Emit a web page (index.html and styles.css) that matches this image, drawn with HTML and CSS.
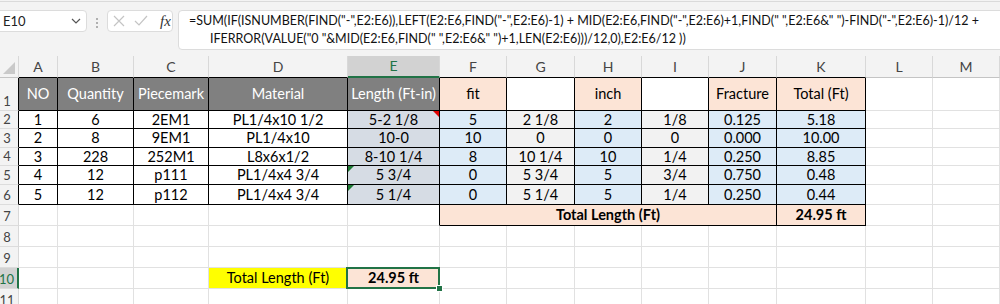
FILE: index.html
```html
<!DOCTYPE html>
<html lang="en">
<head>
    <meta charset="UTF-8">
    <meta name="viewport" content="width=device-width, initial-scale=1.0">
    <title>Total Length</title>
    <link rel="stylesheet" href="styles.css">
</head>
<body>
    <div class="formula-bar">
        <div class="name-box">
            <span>E10</span>
            <svg width="10" height="6" viewBox="0 0 10 6"><polyline points="1,1 5,5 9,1" fill="none" stroke="#555" stroke-width="1.2"/></svg>
        </div>
        <svg class="grip" width="4" height="12" viewBox="0 0 4 12"><circle cx="2" cy="2" r="1"/><circle cx="2" cy="6" r="1"/><circle cx="2" cy="10" r="1"/></svg>
        <div class="fx-box">
            <svg width="12" height="12" viewBox="0 0 12 12"><path d="M1 1 L11 11 M11 1 L1 11" stroke="#c4c4c4" stroke-width="1.2"/></svg>
            <svg width="14" height="12" viewBox="0 0 14 12"><polyline points="1,6 5,10 13,1" fill="none" stroke="#c4c4c4" stroke-width="1.2"/></svg>
            <span class="fx">fx</span>
        </div>
        <div class="formula">
            <div class="line">=SUM(IF(ISNUMBER(FIND("-",E2:E6)),LEFT(E2:E6,FIND("-",E2:E6)-1) + MID(E2:E6,FIND("-",E2:E6)+1,FIND(" ",E2:E6&amp;" ")-FIND("-",E2:E6)-1)/12 +</div>
            <div class="line indent">IFERROR(VALUE("0 "&amp;MID(E2:E6,FIND(" ",E2:E6&amp;" ")+1,LEN(E2:E6)))/12,0),E2:E6/12 ))</div>
        </div>
    </div>

    <div class="sheet">
        <!-- column headers -->
        <div class="c hd corner"></div>
        <div class="c hd edge">A</div>
        <div class="c hd edge">B</div>
        <div class="c hd edge">C</div>
        <div class="c hd edge">D</div>
        <div class="c hd active-col">E</div>
        <div class="c hd edge">F</div>
        <div class="c hd edge">G</div>
        <div class="c hd edge">H</div>
        <div class="c hd edge">I</div>
        <div class="c hd edge">J</div>
        <div class="c hd edge">K</div>
        <div class="c hd">L</div>
        <div class="c hd">M</div>

        <!-- row 1 -->
        <div class="c rh boxed">1</div>
        <div class="c b dark">NO</div>
        <div class="c b dark">Quantity</div>
        <div class="c b dark">Piecemark</div>
        <div class="c b dark">Material</div>
        <div class="c b dark">Length (Ft-in)</div>
        <div class="c b peach">fit</div>
        <div class="c b"></div>
        <div class="c b peach">inch</div>
        <div class="c b"></div>
        <div class="c b peach">Fracture</div>
        <div class="c b peach">Total (Ft)</div>
        <div class="c"></div>
        <div class="c"></div>

        <!-- row 2 -->
        <div class="c rh boxed">2</div>
        <div class="c b">1</div>
        <div class="c b">6</div>
        <div class="c b">2EM1</div>
        <div class="c b">PL1/4x10 1/2</div>
        <div class="c b len note">5-2 1/8</div>
        <div class="c b blue">5</div>
        <div class="c b grey">2 1/8</div>
        <div class="c b blue">2</div>
        <div class="c b grey">1/8</div>
        <div class="c b blue">0.125</div>
        <div class="c b blue">5.18</div>
        <div class="c"></div>
        <div class="c"></div>

        <!-- row 3 -->
        <div class="c rh boxed">3</div>
        <div class="c b">2</div>
        <div class="c b">8</div>
        <div class="c b">9EM1</div>
        <div class="c b">PL1/4x10</div>
        <div class="c b len">10-0</div>
        <div class="c b blue">10</div>
        <div class="c b grey">0</div>
        <div class="c b blue">0</div>
        <div class="c b grey">0</div>
        <div class="c b blue">0.000</div>
        <div class="c b blue">10.00</div>
        <div class="c"></div>
        <div class="c"></div>

        <!-- row 4 -->
        <div class="c rh boxed">4</div>
        <div class="c b">3</div>
        <div class="c b">228</div>
        <div class="c b">252M1</div>
        <div class="c b">L8x6x1/2</div>
        <div class="c b len">8-10 1/4</div>
        <div class="c b blue">8</div>
        <div class="c b grey">10 1/4</div>
        <div class="c b blue">10</div>
        <div class="c b grey">1/4</div>
        <div class="c b blue">0.250</div>
        <div class="c b blue">8.85</div>
        <div class="c"></div>
        <div class="c"></div>

        <!-- row 5 -->
        <div class="c rh boxed">5</div>
        <div class="c b">4</div>
        <div class="c b">12</div>
        <div class="c b">p111</div>
        <div class="c b">PL1/4x4 3/4</div>
        <div class="c b len warn">5 3/4</div>
        <div class="c b blue">0</div>
        <div class="c b grey">5 3/4</div>
        <div class="c b blue">5</div>
        <div class="c b grey">3/4</div>
        <div class="c b blue">0.750</div>
        <div class="c b blue">0.48</div>
        <div class="c"></div>
        <div class="c"></div>

        <!-- row 6 -->
        <div class="c rh boxed">6</div>
        <div class="c b">5</div>
        <div class="c b">12</div>
        <div class="c b">p112</div>
        <div class="c b">PL1/4x4 3/4</div>
        <div class="c b len warn">5 1/4</div>
        <div class="c b blue">0</div>
        <div class="c b grey">5 1/4</div>
        <div class="c b blue">5</div>
        <div class="c b grey">1/4</div>
        <div class="c b blue">0.250</div>
        <div class="c b blue">0.44</div>
        <div class="c"></div>
        <div class="c"></div>

        <!-- row 7 -->
        <div class="c rh">7</div>
        <div class="c"></div>
        <div class="c"></div>
        <div class="c"></div>
        <div class="c"></div>
        <div class="c rb"></div>
        <div class="c b peach bold span5">Total Length (Ft)</div>
        <div class="c b peach bold">24.95 ft</div>
        <div class="c"></div>
        <div class="c"></div>

        <!-- row 8 -->
        <div class="c rh">8</div>
        <div class="c"></div><div class="c"></div><div class="c"></div><div class="c"></div>
        <div class="c"></div><div class="c"></div><div class="c"></div><div class="c"></div>
        <div class="c"></div><div class="c"></div><div class="c"></div><div class="c"></div>
        <div class="c"></div>

        <!-- row 9 -->
        <div class="c rh">9</div>
        <div class="c"></div><div class="c"></div><div class="c"></div><div class="c"></div>
        <div class="c"></div><div class="c"></div><div class="c"></div><div class="c"></div>
        <div class="c"></div><div class="c"></div><div class="c"></div><div class="c"></div>
        <div class="c"></div>

        <!-- row 10 -->
        <div class="c rh active-row">10</div>
        <div class="c"></div>
        <div class="c"></div>
        <div class="c"></div>
        <div class="c yellow">Total Length (Ft)</div>
        <div class="c peach bold selected">24.95 ft</div>
        <div class="c"></div><div class="c"></div><div class="c"></div><div class="c"></div>
        <div class="c"></div><div class="c"></div><div class="c"></div><div class="c"></div>

        <!-- row 11 -->
        <div class="c rh">11</div>
        <div class="c"></div><div class="c"></div><div class="c"></div><div class="c"></div>
        <div class="c"></div><div class="c"></div><div class="c"></div><div class="c"></div>
        <div class="c"></div><div class="c"></div><div class="c"></div><div class="c"></div>
        <div class="c"></div>
    </div>
</body>
</html>
```

FILE: styles.css
```css
body {
    margin: 0;
    background-color: #f3f3f3;
    font-family: 'Lato', 'Liberation Sans', sans-serif;
    overflow: hidden;
}

/* formula bar */
.formula-bar {
    height: 55px;
    margin-top: 1px;
    box-sizing: border-box;
    border-top: 1px solid #dadada;
    padding-top: 8px;
    display: flex;
    align-items: flex-start;
}

.name-box {
    width: 93px;
    height: 22px;
    margin-left: -6px;
    box-sizing: border-box;
    background-color: #fff;
    border: 1px solid #dcdcdc;
    border-radius: 4px;
    display: flex;
    align-items: center;
    justify-content: space-between;
    padding: 0 5px 0 8px;
    font-size: 13px;
    color: #222;
}

.grip {
    margin: 7px 0 0 8px;
    fill: #9a9a9a;
}

.fx-box {
    width: 66px;
    height: 22px;
    margin-left: 8px;
    box-sizing: border-box;
    background-color: #fff;
    border: 1px solid #dcdcdc;
    border-radius: 4px;
    display: flex;
    align-items: center;
    gap: 9px;
    padding-left: 5px;
}

.fx {
    font-family: 'Liberation Serif', serif;
    font-style: italic;
    font-size: 15px;
    color: #333;
    margin-left: 3px;
}

.formula {
    flex: 1;
    height: 40px;
    margin: 0 -10px 0 5px;
    box-sizing: border-box;
    background-color: #fff;
    border: 1px solid #dcdcdc;
    border-radius: 4px;
    padding: 1px 0 0 10px;
    font-size: 12.5px;
    line-height: 18px;
    color: #111;
    overflow: hidden;
}

.formula .line {
    white-space: pre;
}

.formula .indent {
    padding-left: 21px;
}

/* sheet grid */
.sheet {
    display: grid;
    grid-template-columns: 19px 39px 76px 75px 139px 92px 67px 68px 67px 67px 68px 89px 67px 67px;
    grid-template-rows: 22px 33px 18px 19px 18px 19px 20px 21px 21px 21px 21px 21px;
    background-color: #fff;
}

.c {
    position: relative;
    box-sizing: border-box;
    border-right: 1px solid #e1e1e1;
    border-bottom: 1px solid #e1e1e1;
    display: flex;
    align-items: center;
    justify-content: center;
    font-size: 14.5px;
    line-height: 16px;
    color: #000;
    white-space: nowrap;
    overflow: hidden;
}

.hd {
    background-color: #f3f3f3;
    color: #444;
    font-size: 14px;
    border-right-color: #d8d8d8;
    border-bottom-color: #c4c4c4;
}

.hd.edge {
    border-bottom-color: #000;
}

.active-col {
    background-color: #d2d2d2;
    color: #217346;
    border-bottom: 2px solid #217346;
}

.corner::after {
    content: "";
    position: absolute;
    right: 3px;
    bottom: 3px;
    border-left: 12px solid transparent;
    border-bottom: 12px solid #c9c9c9;
}

.rh {
    background-color: #f3f3f3;
    color: #444;
    font-size: 13px;
    align-items: flex-end;
    padding: 0 4px 1px 0;
    border-right-color: #d8d8d8;
    border-bottom-color: #dcdcdc;
}

.rh.boxed {
    border-right-color: #000;
}

.active-row {
    background-color: #d2d2d2;
    color: #217346;
    border-right: 2px solid #217346;
}

.b {
    border-right-color: #000;
    border-bottom-color: #000;
}

.rb {
    border-right-color: #000;
}

.dark {
    background-color: #808080;
    color: #fff;
}

.peach {
    background-color: #fce4d6;
}

.len {
    background-color: #d6dce4;
}

.blue {
    background-color: #ddebf7;
}

.grey {
    background-color: #f2f2f2;
}

.yellow {
    background-color: #ffff00;
}

.bold {
    font-weight: bold;
}

.span5 {
    grid-column: span 5;
}

/* comment and error markers */
.note::after {
    content: "";
    position: absolute;
    top: 0;
    right: 0;
    border-left: 6px solid transparent;
    border-top: 6px solid #e00000;
}

.warn::before {
    content: "";
    position: absolute;
    top: 0;
    left: 0;
    border-right: 6px solid transparent;
    border-top: 6px solid #1e7b34;
}

/* active cell */
.selected {
    overflow: visible;
    z-index: 1;
}

.selected::before {
    content: "";
    position: absolute;
    top: -1px;
    left: -2px;
    right: -1px;
    bottom: -1px;
    border: 2px solid #217346;
}

.selected::after {
    content: "";
    position: absolute;
    right: -4px;
    bottom: -4px;
    width: 5px;
    height: 5px;
    background-color: #217346;
    border: 1px solid #fff;
}
```
